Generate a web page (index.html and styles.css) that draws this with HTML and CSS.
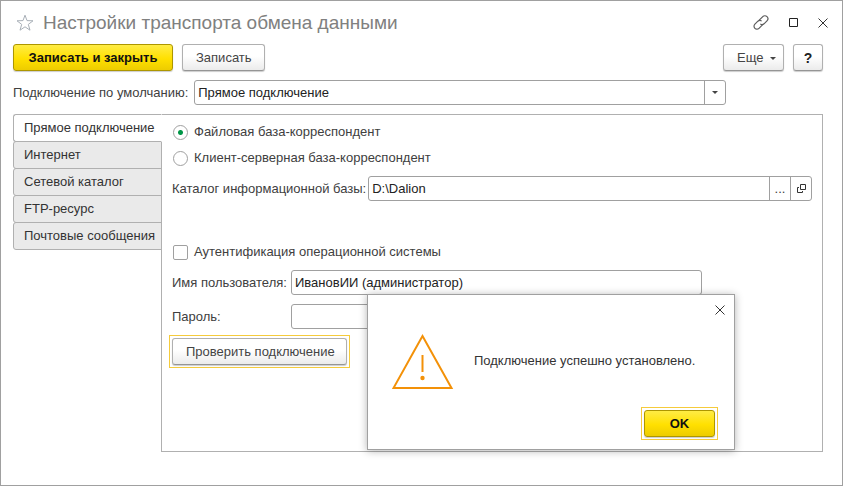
FILE: index.html
```html
<!DOCTYPE html>
<html lang="ru">
<head>
<meta charset="utf-8">
<title>Настройки транспорта обмена данными</title>
<link rel="stylesheet" href="styles.css">
</head>
<body>
<main class="window">
  <header class="titlebar">
    <button class="icon-btn" type="button" aria-label="В избранное">
      <svg width="18" height="18" viewBox="0 0 18 18" fill="none" stroke="#a9b0b8"><path d="M9 1.200 L11 6.600 L17 6.800 L12.300 10.400 L14 16.200 L9 12.800 L4 16.200 L5.700 10.400 L1 6.800 L7 6.600 Z"/></svg>
    </button>
    <h1 class="title">Настройки транспорта обмена данными</h1>
    <div class="window-controls">
      <button class="icon-btn" type="button" aria-label="Получить ссылку">
        <svg width="16" height="18" viewBox="0 0 16 18" fill="none" stroke="#5c5c5c" stroke-width="1.2" stroke-linecap="round"><path d="M6.200 6.200 L9.800 2.600 C11 1.400 12.800 1.500 14 2.700 C15.200 3.900 15.200 5.600 14 6.800 L11 9.800 C10 10.700 8.800 10.800 7.700 10.200"/><path d="M9.700 10.600 L6 14.300 C4.800 15.500 3 15.500 1.900 14.300 C.7 13.100 .7 11.400 1.900 10.200 L4.900 7.200 C5.900 6.300 7.100 6.200 8.200 6.800"/></svg>
      </button>
      <button class="icon-btn" type="button" aria-label="Развернуть">
        <svg width="9" height="9" viewBox="0 0 9 9" fill="none" stroke="#222"><path d="M.5 .5 H8.5 V8.5 H.5 Z"/></svg>
      </button>
      <button class="icon-btn" type="button" aria-label="Закрыть окно">
        <svg width="10" height="10" viewBox="0 0 10 10" stroke="#333"><path d="M.5 .5 L9.5 9.5 M9.5 .5 L.5 9.5"/></svg>
      </button>
    </div>
  </header>

  <div class="toolbar">
    <button class="btn primary save-close" type="button">Записать и закрыть</button>
    <button class="btn save" type="button">Записать</button>
    <button class="btn more" type="button">Еще <span class="caret"></span></button>
    <button class="btn help" type="button">?</button>
  </div>

  <div class="default-row">
    <label for="default">Подключение по умолчанию:</label>
    <div class="field default-field">
      <select id="default"><option>Прямое подключение</option></select>
      <span class="field-btn drop"><span class="caret"></span></span>
    </div>
  </div>

  <div class="pages">
    <nav class="tabs" role="tablist" aria-label="Вид транспорта">
      <button class="tab active" type="button" role="tab" aria-selected="true">Прямое подключение</button>
      <button class="tab" type="button" role="tab">Интернет</button>
      <button class="tab" type="button" role="tab">Сетевой каталог</button>
      <button class="tab" type="button" role="tab">FTP-ресурс</button>
      <button class="tab" type="button" role="tab">Почтовые сообщения</button>
    </nav>
    <section class="panel">
      <label class="option"><input type="radio" name="base" checked>Файловая база-корреспондент</label>
      <label class="option"><input type="radio" name="base">Клиент-серверная база-корреспондент</label>
      <div class="row directory">
        <label for="directory">Каталог информационной базы:</label>
        <div class="field">
          <input id="directory" type="text" value="D:\Dalion">
          <button class="field-btn" type="button" aria-label="Выбрать">...</button>
          <button class="field-btn" type="button" aria-label="Открыть">
            <svg width="9" height="9" viewBox="0 0 9 9" fill="none" stroke="#333"><path d="M3.5 .5 H8.5 V5.5 H3.5 Z M2 3.5 H.5 V8.5 H5.5 V7"/></svg>
          </button>
        </div>
      </div>
      <label class="option auth"><input type="checkbox">Аутентификация операционной системы</label>
      <div class="row credential">
        <label for="user">Имя пользователя:</label>
        <div class="field"><input id="user" type="text" value="ИвановИИ (администратор)"></div>
      </div>
      <div class="row credential">
        <label for="password">Пароль:</label>
        <div class="field"><input id="password" type="password"></div>
      </div>
      <div class="focus-frame"><button class="btn check" type="button">Проверить подключение</button></div>
    </section>
  </div>

  <div class="dialog" role="alertdialog" aria-labelledby="message">
    <button class="icon-btn dialog-close" type="button" aria-label="Закрыть">
      <svg width="10" height="10" viewBox="0 0 10 10" stroke="#333"><path d="M.5 .5 L9.5 9.5 M9.5 .5 L.5 9.5"/></svg>
    </button>
    <div class="dialog-body">
      <svg width="62" height="56" viewBox="0 0 62 56" fill="none" stroke="#f39108" stroke-width="2"><path d="M30.500 3 L59.500 55 H1.500 Z"/><path d="M30.500 22 V39"/><circle cx="30.500" cy="45" r="2.200" fill="#f39108" stroke="none"/></svg>
      <p id="message">Подключение успешно установлено.</p>
    </div>
    <div class="focus-frame dialog-action"><button class="btn primary ok" type="button">OK</button></div>
  </div>
</main>
</body>
</html>
```
FILE: styles.css
```css
* { box-sizing: border-box; }

body {
  margin: 0;
  background: #fff;
  color: #404040;
  font: 13px/16px "Liberation Sans", Arial, sans-serif;
}

button, input, select { font: inherit; color: inherit; margin: 0; }
label { white-space: nowrap; }

.window {
  position: relative;
  min-height: 100vh;
  padding: 0 19px 33px 12px;
  border: 1px solid #a0a0a0;
  display: flex;
  flex-direction: column;
}

.titlebar {
  display: flex;
  align-items: center;
  height: 43px;
  padding-left: 3px;
}

.title {
  flex: 1;
  margin: 0 0 0 9px;
  color: #808080;
  font-size: 19px;
  font-weight: normal;
  line-height: 24px;
}

.icon-btn {
  display: flex;
  padding: 0;
  border: 0;
  background: none;
}

.window-controls {
  display: flex;
  align-items: center;
  gap: 20px;
  margin-right: -5px;
}

.toolbar { display: flex; gap: 9px; }

.btn {
  height: 27px;
  padding: 0 13px;
  border: 1px solid #b0b0b0;
  border-bottom-color: #959595;
  border-radius: 3px;
  background: linear-gradient(#fff 45%, #ebebeb);
  box-shadow: 0 1px 1px #ccc;
  color: #444;
  white-space: nowrap;
}

.primary {
  border-color: #ad9600;
  background: linear-gradient(#ffec45, #ffe000 55%, #edcc00);
  color: #111;
  font-weight: bold;
}

.save-close { width: 160px; }
.save { width: 83px; }
.more { width: 61px; margin-left: auto; }
.help { width: 30px; padding: 0; color: #222; font-size: 14px; font-weight: bold; }

.caret {
  display: inline-block;
  border: 3px solid transparent;
  border-top-color: #444;
  border-bottom: 0;
  vertical-align: middle;
}

.more .caret { margin-left: 3px; }

.default-row {
  display: flex;
  align-items: center;
  gap: 6px;
  margin-top: 9px;
}

.field {
  display: flex;
  flex: 1;
  height: 25px;
  border: 1px solid #a0a0a0;
  border-radius: 3px;
  background: #fff;
  overflow: hidden;
}

.field input, .field select {
  flex: 1;
  min-width: 0;
  padding: 0 3px;
  border: 0;
  outline: 0;
  background: none;
  appearance: none;
  color: #222;
}

.field-btn {
  display: flex;
  align-items: center;
  justify-content: center;
  width: 21px;
  padding: 0;
  border: 0;
  border-left: 1px solid #a0a0a0;
  background: none;
}

.default-field { position: relative; flex: 0 1 532px; }

.drop {
  position: absolute;
  inset: 0 0 0 auto;
  pointer-events: none;
}

.pages {
  display: flex;
  flex: 1;
  margin-top: 9px;
}

.tabs {
  display: flex;
  flex-direction: column;
  width: 149px;
  margin-right: -1px;
}

.tab {
  height: 28px;
  margin-bottom: -1px;
  padding: 0 0 0 10px;
  border: 1px solid #b0b0b0;
  border-radius: 3px 0 0 3px;
  background: #eaeaea;
  color: #333;
  text-align: left;
  white-space: nowrap;
}

.tab.active {
  z-index: 1;
  border-right-color: #fff;
  background: #fff;
}

.panel {
  flex: 1;
  min-width: 0;
  padding: 4px 10px 10px;
  border: 1px solid #b0b0b0;
}

.option {
  display: flex;
  align-items: center;
  gap: 6px;
  height: 26px;
}

.option input {
  width: 15px;
  height: 15px;
  margin-left: 1px;
  border: 1px solid #a0a0a0;
  border-radius: 2px;
  background: #fff;
  appearance: none;
}

.option input[type="radio"] { border-radius: 50%; }
.option input[type="radio"]:checked { background: radial-gradient(circle, #009646 2px, #fff 3px); }

.row {
  display: flex;
  align-items: center;
  gap: 5px;
}

.directory { gap: 2px; margin-top: 5px; }
.auth { margin-top: 38px; }
.credential { width: 530px; margin-bottom: 9px; }
.auth + .credential { margin-top: 5px; }
.credential label { width: 114px; }

.focus-frame {
  width: max-content;
  padding: 2px;
  border: 1px solid #f5cb3c;
}

.panel .focus-frame { margin: -3px 0 0 -3px; }
.check { display: block; width: 175px; }

.dialog {
  position: absolute;
  right: 107px;
  bottom: 35px;
  z-index: 2;
  display: flex;
  flex-direction: column;
  width: 368px;
  height: 156px;
  padding: 10px 16px 9px 24px;
  border: 1px solid #a0a0a0;
  background: #fff;
  box-shadow: 0 1px 8px rgba(0, 0, 0, .3);
}

.dialog-close { align-self: flex-end; margin-right: -7px; }

.dialog-body {
  display: flex;
  align-items: center;
  gap: 20px;
  margin-top: 18px;
  color: #333;
}

.dialog-body p { margin: 0; }
.dialog-action { margin: auto 0 0 auto; }
.ok { display: block; width: 71px; }
```
